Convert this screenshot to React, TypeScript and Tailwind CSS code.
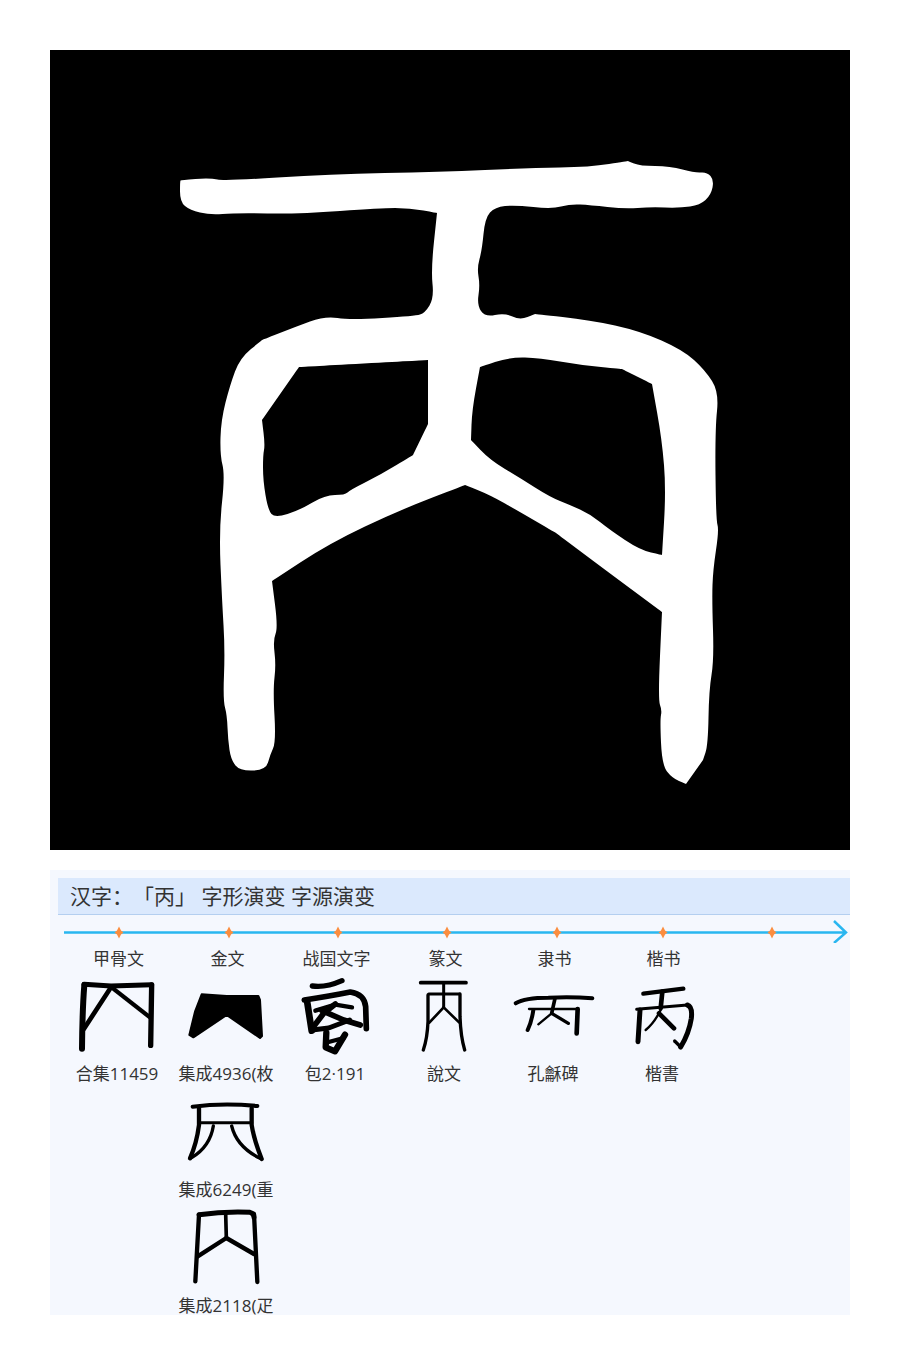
import React from 'react';

type Pt = [number, number];

// Soften a traced outline: quadratic curves through the midpoints of each edge
const smooth = (pts: Pt[]) => {
    const mid = (a: Pt, b: Pt) => `${(a[0] + b[0]) / 2} ${(a[1] + b[1]) / 2}`;
    let d = `M${mid(pts[pts.length - 1], pts[0])}`;
    pts.forEach((p, i) => {
        d += ` Q${p[0]} ${p[1]} ${mid(p, pts[(i + 1) % pts.length])}`;
    });
    return d + ' Z';
};

const outer: Pt[] = [
    [180, 181], [181, 180], [210, 178], [225, 181], [330, 174], [440, 172], [530, 168], [590, 167], [628, 161], [628, 161], [640, 166], [670, 166], [695, 173], [707, 172], [714, 180], [711, 195], [700, 205], [680, 208], [650, 207], [625, 209], [590, 205], [570, 204], [552, 209], [515, 205], [495, 207], [485, 218], [482, 250], [477, 268], [480, 285], [477, 305], [485, 317], [505, 313], [520, 320], [535, 314], [535, 314], [590, 320], [640, 331], [683, 350], [705, 370], [719, 392], [715, 430], [716, 520], [719, 530], [713, 570], [712, 600], [714, 660], [709, 690], [708, 745], [703, 760], [703, 760], [686, 784], [686, 784], [672, 778], [662, 765], [660, 720], [662, 710], [658, 700], [662, 612], [662, 612], [600, 566], [556, 533], [556, 533], [520, 512], [490, 495], [465, 485], [465, 485], [400, 510], [330, 543], [272, 581], [272, 581], [278, 628], [273, 640], [276, 665], [273, 690], [276, 742], [270, 755], [266, 770], [240, 771], [231, 760], [228, 740], [227, 715], [223, 700], [225, 650], [222, 600], [219, 530], [225, 475], [220, 455], [221, 420], [230, 385], [240, 358], [262, 340], [262, 340], [295, 327], [325, 316], [350, 320], [415, 316], [425, 313], [434, 298], [431, 270], [437, 213], [437, 213], [410, 208], [380, 208], [300, 214], [235, 213], [210, 215], [190, 210], [180, 202],
];
const holeLeft: Pt[] = [
    [299, 367], [299, 367], [428, 360], [428, 360], [428, 424], [428, 424], [413, 455], [413, 455], [380, 475], [350, 490], [345, 495], [325, 495], [300, 510], [275, 518], [268, 510], [263, 480], [263, 455], [265, 445], [262, 420], [262, 420],
];
const holeRight: Pt[] = [
    [480, 367], [480, 367], [510, 357], [540, 358], [580, 365], [622, 369], [622, 369], [652, 384], [652, 384], [662, 440], [666, 490], [662, 555], [662, 555], [640, 550], [610, 530], [590, 514], [570, 505], [550, 497], [520, 478], [490, 460], [471, 440], [471, 440], [472, 410],
];

type Stroke = [string, number];

interface GlyphProps {
    viewBox: string;
    strokes?: Stroke[];
    fill?: string;
}

const Glyph: React.FC<GlyphProps> = ({ viewBox, strokes = [], fill }) => (
    <svg viewBox={viewBox} className="w-[96px] h-[80px] mr-[3px] shrink-0" fill="none" stroke="#000" strokeLinecap="round" strokeLinejoin="round">
        {fill && <path d={fill} fill="#000" strokeWidth={6} />}
        {strokes.map(([d, w]) => (
            <path key={d} d={d} strokeWidth={w} />
        ))}
    </svg>
);

interface Form {
    glyph: GlyphProps;
    caption: string;
}

const columns: { label: string; forms: Form[] }[] = [
    {
        label: '甲骨文',
        forms: [
            {
                caption: '合集11459',
                glyph: {
                    viewBox: '57 348 288 240',
                    strokes: [
                        ['M102 373 L183 378 L305 374', 15],
                        ['M103 375 Q97 450 96 566', 18],
                        ['M305 375 L302 556', 16],
                        ['M183 382 L102 506', 14],
                        ['M185 382 L300 472', 13],
                    ],
                },
            },
        ],
    },
    {
        label: '金文',
        forms: [
            {
                caption: '集成4936(枚',
                glyph: {
                    viewBox: '384 348 288 240',
                    fill: 'M455 403 L530 408 L625 408 L630 420 L636 528 L630 534 L530 465 L430 532 L418 525 L435 455 Z',
                },
            },
            {
                caption: '集成6249(重',
                glyph: {
                    viewBox: '384 6 288 240',
                    strokes: [
                        ['M428 50 Q520 38 622 48', 12],
                        ['M447 55 L447 105 Q440 160 420 205', 13],
                        ['M605 55 L605 105 Q612 150 635 207', 13],
                        ['M447 98 L605 98', 9],
                        ['M490 108 Q480 170 425 203', 10],
                        ['M545 108 Q560 170 630 205', 10],
                    ],
                },
            },
            {
                caption: '集成2118(疋',
                glyph: {
                    viewBox: '384 352 288 240',
                    strokes: [
                        ['M447 372 Q520 362 600 365 Q612 368 612 380', 15],
                        ['M447 372 L436 572', 13],
                        ['M612 370 L622 574', 13],
                        ['M527 368 L529 440', 11],
                        ['M529 442 L442 498', 13],
                        ['M529 442 L612 490', 13],
                    ],
                },
            },
        ],
    },
    {
        label: '战国文字',
        forms: [
            {
                caption: '包2·191',
                glyph: {
                    viewBox: '0 18 288 240',
                    strokes: [
                        ['M76 48 Q115 54 165 32', 16],
                        ['M52 90 Q130 78 190 66 Q232 72 236 110 L238 176', 17],
                        ['M60 92 L74 182', 20],
                        ['M145 102 L110 130 L78 172', 17],
                        ['M85 122 L145 104 L195 112', 13],
                        ['M105 122 L170 150 L220 165', 17],
                        ['M75 180 L125 174 L188 150', 15],
                        ['M118 188 L116 232 L144 244 L174 194', 19],
                        ['M125 216 L170 204', 13],
                    ],
                },
            },
        ],
    },
    {
        label: '篆文',
        forms: [
            {
                caption: '說文',
                glyph: {
                    viewBox: '0 18 288 240',
                    strokes: [
                        ['M74 38 L210 38', 11],
                        ['M143 40 L143 112', 9],
                        ['M98 72 L190 72', 9],
                        ['M96 75 L96 155 Q94 205 82 240', 10],
                        ['M192 72 L192 140 Q194 200 206 240', 10],
                        ['M143 112 L100 158', 8],
                        ['M143 112 L190 158', 8],
                    ],
                },
            },
        ],
    },
    {
        label: '隶书',
        forms: [
            {
                caption: '孔龢碑',
                glyph: {
                    viewBox: '0 -27 288 240',
                    strokes: [
                        ['M32 55 Q60 38 130 38 Q200 34 262 40', 12],
                        ['M85 75 Q80 110 68 135', 12],
                        ['M150 40 L140 85', 11],
                        ['M72 72 L215 72', 7],
                        ['M218 72 L215 145', 14],
                        ['M140 85 L100 118', 7],
                        ['M140 85 L190 115', 10],
                    ],
                },
            },
        ],
    },
    {
        label: '楷书',
        forms: [
            {
                caption: '楷書',
                glyph: {
                    viewBox: '0 3 288 240',
                    strokes: [
                        ['M88 56 L208 41', 13],
                        ['M145 50 L140 100', 14],
                        ['M68 103 L220 90', 9],
                        ['M220 90 Q236 95 232 130 Q225 175 200 216', 15],
                        ['M200 216 L182 198', 10],
                        ['M78 105 L72 200', 15],
                        ['M140 105 Q120 145 95 165', 7],
                        ['M135 115 L180 160', 14],
                    ],
                },
            },
        ],
    },
];

const markers = [119, 229, 338, 447, 557, 663, 772];

export default function App() {
    return (
        <div className="min-h-[1365px] bg-white px-[50px] pt-[50px] font-['Open_Sans','Noto_Sans_CJK_SC',sans-serif] text-[#333]">
            <div className="bg-black h-[800px]">
                <svg viewBox="50 50 800 800" className="block w-full h-full">
                    <path d={`${smooth(outer)} ${smooth(holeLeft)} ${smooth(holeRight)}`} fill="#fff" fillRule="evenodd" />
                </svg>
            </div>

            <div className="mt-[20px] h-[445px] overflow-hidden bg-[#f5f8fe] pt-[8px] pl-[8px]">
                <div className="h-[37px] bg-[#dbe9fd] border-b border-[#b4cff0] pl-3 text-[21px] leading-[36px] whitespace-pre [text-spacing-trim:space-all]">
                    汉字：「丙」 字形演变 字源演变
                </div>

                <svg viewBox="58 915 792 28" className="block w-[792px] h-[28px]" fill="none">
                    <path d="M64 932.5 H846 M834 921 L846 932.5 L834 943" stroke="#29b6f0" strokeWidth={2.5} />
                    {markers.map((x) => (
                        <path key={x} d={`M${x} 926.5 L${x + 2} 930.5 L${x + 4.5} 932.5 L${x + 2} 934.5 L${x} 938.5 L${x - 2} 934.5 L${x - 4.5} 932.5 L${x - 2} 930.5 Z`} fill="#fb8d3f" />
                    ))}
                </svg>

                <div className="flex mt-[5px] pl-[6px]">
                    {columns.map((col) => (
                        <div key={col.label} className="w-[109px] flex flex-col items-center">
                            <div className="h-[22px] leading-[22px] text-[17px] mb-[6px]">{col.label}</div>
                            {col.forms.map((form) => (
                                <React.Fragment key={form.caption}>
                                    <Glyph {...form.glyph} />
                                    <div className="w-[97px] h-[36px] mr-[3px] shrink-0 overflow-hidden whitespace-nowrap text-center text-[17px] leading-[36px]">
                                        {form.caption}
                                    </div>
                                </React.Fragment>
                            ))}
                        </div>
                    ))}
                </div>
            </div>
        </div>
    );
}
